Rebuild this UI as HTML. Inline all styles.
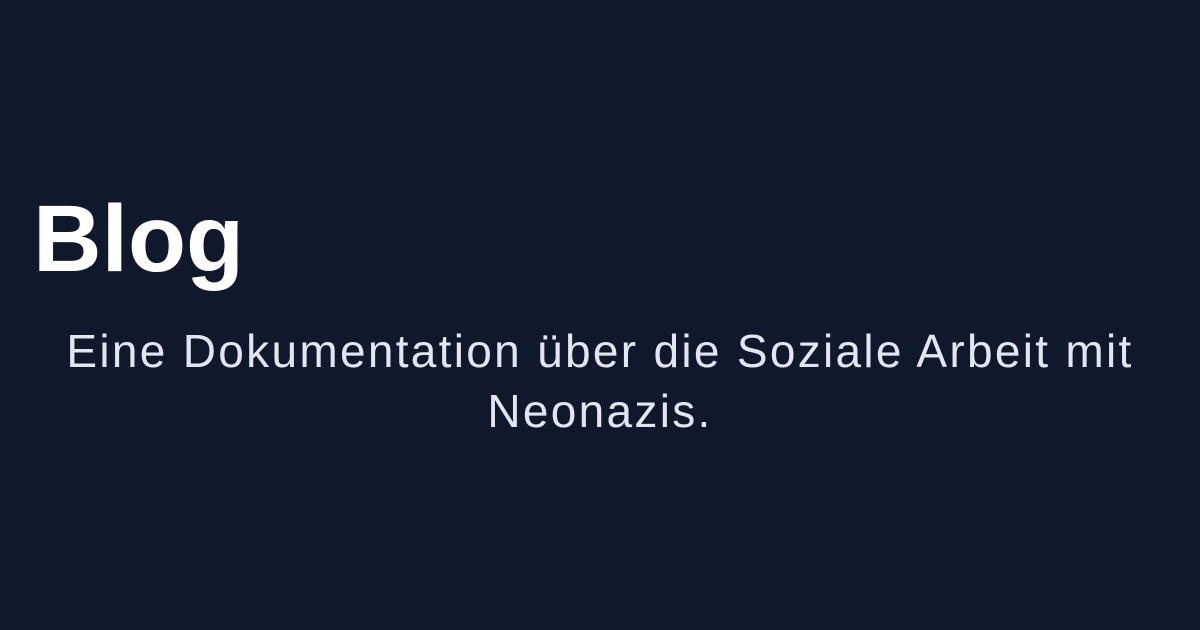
<!DOCTYPE html>
<html><head><meta charset="utf-8"><style>
html,body{margin:0;padding:0;}
body{width:1200px;height:630px;background:#10182b;font-family:"Liberation Sans",sans-serif;position:relative;overflow:hidden;}
h1{position:absolute;left:33px;top:184px;margin:0;font-size:95px;font-weight:bold;color:#fff;line-height:110px;letter-spacing:0;}
p{position:absolute;left:0;width:1200px;top:321px;margin:0;text-align:center;font-size:46px;line-height:60px;letter-spacing:2.3px;color:#e2e6ee;}
</style></head><body>
<h1>Blog</h1>
<p>Eine Dokumentation über die Soziale Arbeit mit<br>Neonazis.</p>
</body></html>
